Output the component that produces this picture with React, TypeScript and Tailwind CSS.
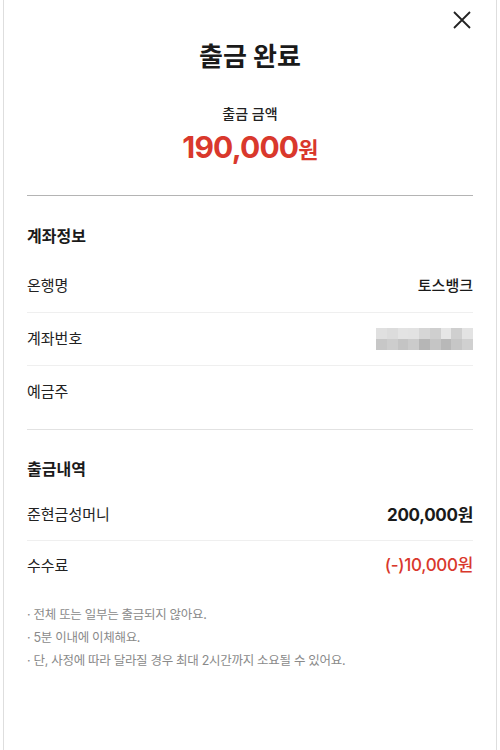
import React from 'react';

const maskTop = ['#e0e0e0', '#dcdcdc', '#e3e3e3', '#e2e2e2', '#d6d6d6', '#cfcfcf', '#e6e6e6', '#cfcfcf', '#e3e3e3'];
const maskBottom = ['#c7c7c7', '#cdcdcd', '#c4c4c4', '#cbcbcb', '#b6b6b6', '#c5c5c5', '#b8b8b8', '#c6c6c6', '#d0d0d0'];

function MaskedAccount() {
  return (
    <div className="grid grid-cols-9 w-[97px]">
      {[...maskTop, ...maskBottom].map((c, i) => (
        <div key={i} className="h-[11px]" style={{ backgroundColor: c }} />
      ))}
    </div>
  );
}

function Row({ label, children, last = false, tall = true }: { label: string; children?: React.ReactNode; last?: boolean; tall?: boolean }) {
  return (
    <div className={`flex items-center justify-between ${tall ? 'h-[53px]' : 'h-[50px]'} ${last ? '' : 'border-b border-[#efefef]'}`}>
      <span className="text-[15px] text-[#222]">{label}</span>
      {children}
    </div>
  );
}

export default function App() {
  const notes = [
    '전체 또는 일부는 출금되지 않아요.',
    '5분 이내에 이체해요.',
    '단, 사정에 따라 달라질 경우 최대 2시간까지 소요될 수 있어요.'
  ];

  return (
    <div
      className="w-[500px] h-[750px] bg-white px-[3px]"
      style={{ fontFamily: 'Inter, "Noto Sans CJK KR", "Noto Sans", sans-serif' }}
    >
      <div className="h-full border-x border-[#dedede] px-[23px] relative">
        {/* Close */}
        <button className="absolute right-[22px] top-[8px] w-6 h-6 flex items-center justify-center text-[#222]">
          <svg width="20" height="20" viewBox="0 0 20 20" fill="none" stroke="currentColor" strokeWidth="1.8">
            <path d="M2 2 L18 18 M18 2 L2 18" />
          </svg>
        </button>

        {/* Header */}
        <div className="flex flex-col items-center pt-[38px] pb-[25px] border-b border-[#b4b4b4]">
          <h1 className="text-[26px] leading-[38px] font-bold text-[#1a1a1a]">출금 완료</h1>
          <p className="mt-[28px] text-[14px] leading-[20px] font-medium text-[#222]">출금 금액</p>
          <p className="mt-[3px] text-[30px] leading-[40px] font-bold text-[#d9382c] tracking-[-0.8px]">
            190,000<span className="text-[22px]">원</span>
          </p>
        </div>

        {/* 계좌정보 */}
        <div className="pt-[28px] pb-[10px] border-b border-[#e2e2e2]">
          <h2 className="text-[16px] leading-[24px] font-bold text-[#1a1a1a] mb-[12px]">계좌정보</h2>
          <Row label="온행명">
            <span className="text-[15px] font-medium text-[#1a1a1a]">토스뱅크</span>
          </Row>
          <Row label="계좌번호">
            <MaskedAccount />
          </Row>
          <Row label="예금주" last />
        </div>

        {/* 출금내역 */}
        <div className="pt-[27px]">
          <h2 className="text-[16px] leading-[24px] font-bold text-[#1a1a1a] mb-[10px]">출금내역</h2>
          <Row label="준현금성머니" tall={false}>
            <span className="text-[17px] font-bold text-[#1a1a1a] tracking-[-0.3px]">200,000원</span>
          </Row>
          <Row label="수수료" last tall={false}>
            <span className="text-[17px] font-medium text-[#d9382c] tracking-[-0.3px]">(-)10,000원</span>
          </Row>
        </div>

        {/* Notes */}
        <ul className="mt-[12px] flex flex-col">
          {notes.map((n) => (
            <li key={n} className="text-[12.5px] leading-[23px] text-[#8a8a8a] tracking-[-0.3px]">
              · {n}
            </li>
          ))}
        </ul>
      </div>
    </div>
  );
}
